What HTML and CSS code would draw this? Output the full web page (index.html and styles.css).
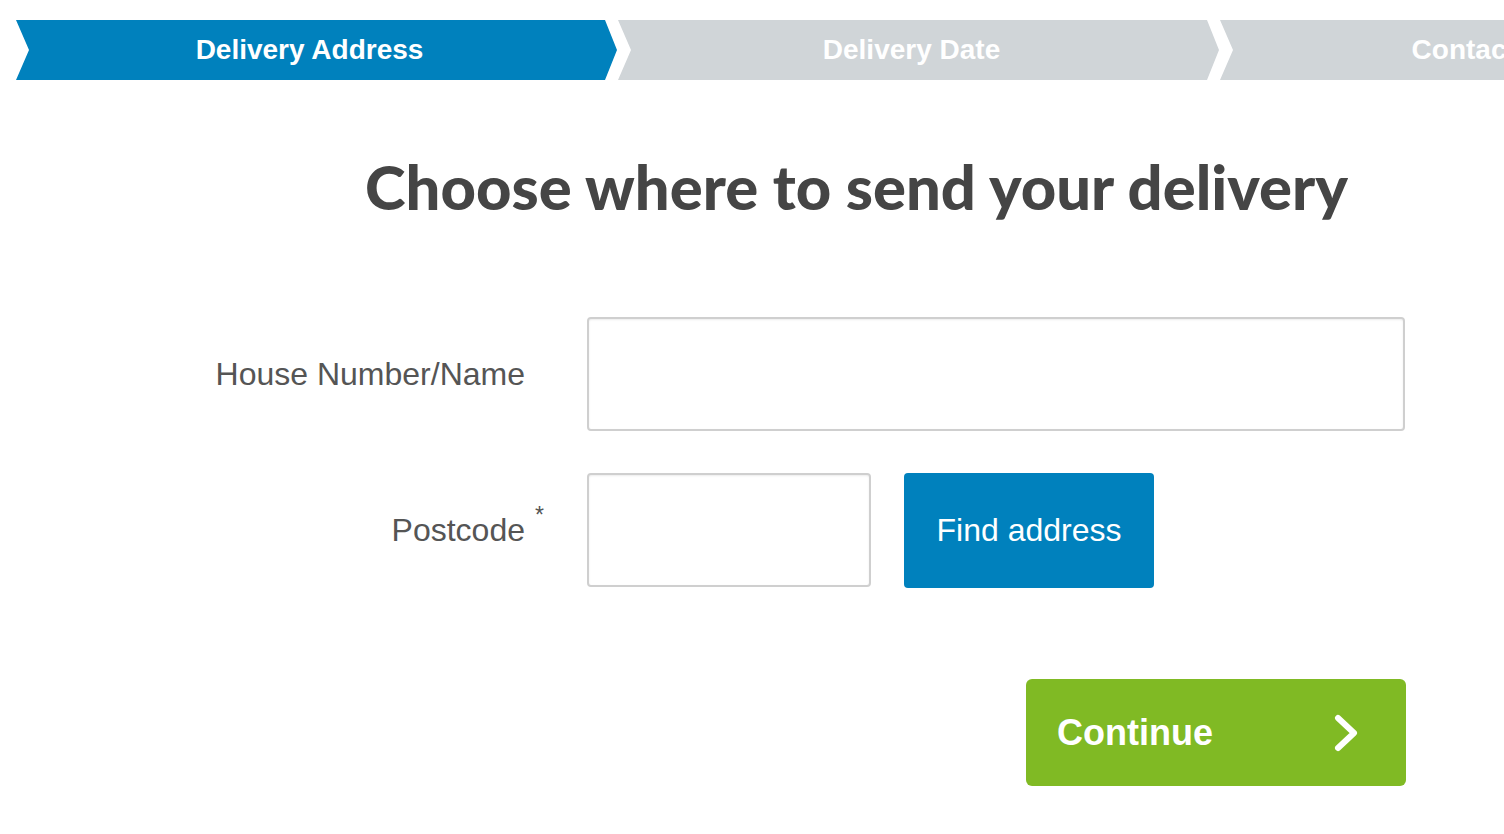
FILE: index.html
```html
<!DOCTYPE html>
<html lang="en">
<head>
    <meta charset="UTF-8">
    <title>Choose where to send your delivery</title>
    <link rel="stylesheet" href="styles.css">
</head>
<body>
    <nav class="steps">
        <div class="step active">Delivery Address</div>
        <div class="step">Delivery Date</div>
        <div class="step">Contact Details</div>
    </nav>

    <main class="content">
        <h1>Choose where to send your delivery</h1>

        <form class="address-form">
            <label class="field-label" for="house">House Number/Name</label>
            <div class="field-row">
                <input type="text" id="house" class="input input-wide">
            </div>

            <label class="field-label" for="postcode">Postcode<span class="req">*</span></label>
            <div class="field-row">
                <input type="text" id="postcode" class="input input-short">
                <button type="button" class="btn-find">Find address</button>
            </div>
        </form>

        <div class="actions">
            <button type="submit" class="btn-continue">
                <span>Continue</span>
                <svg width="26" height="38" viewBox="0 0 26 38">
                    <polyline points="4,4 20,19 4,34" fill="none" stroke="#fff" stroke-width="6" stroke-linecap="round" stroke-linejoin="round"/>
                </svg>
            </button>
        </div>
    </main>
</body>
</html>
```

FILE: styles.css
```css
body {
    margin: 0;
    font-family: "Liberation Sans", Arial, sans-serif;
    background: #fff;
    color: #555;
}
.steps {
    display: flex;
    gap: 1px;
    margin-top: 20px;
    padding-left: 16px;
    overflow: hidden;
}
.step {
    flex: 0 0 601px;
    height: 60px;
    display: flex;
    align-items: center;
    justify-content: center;
    padding-right: 14px;
    box-sizing: border-box;
    background: #d0d5d8;
    color: #fff;
    font-weight: bold;
    font-size: 28px;
    white-space: nowrap;
    clip-path: polygon(0 0, calc(100% - 12px) 0, 100% 50%, calc(100% - 12px) 100%, 0 100%, 13px 50%);
}
.step.active {
    background: #0081bd;
}
.content {
    width: 1219px;
    margin-left: 187px;
}
h1 {
    margin: 66px 0 0 120px;
    font-family: Lato, "Liberation Sans", sans-serif;
    font-weight: 900;
    font-size: 61.5px;
    line-height: 80px;
    color: #454545;
    text-align: center;
}
.address-form {
    display: grid;
    grid-template-columns: 400px 1fr;
    row-gap: 42px;
    margin-top: 91px;
}
.field-label {
    display: flex;
    align-items: center;
    justify-content: flex-end;
    padding-right: 62px;
    font-size: 32px;
    color: #555;
}
.req {
    font-size: 23px;
    align-self: flex-start;
    margin: 29px -22px 0 10px;
    width: 12px;
}
.field-row {
    display: flex;
    gap: 33px;
}
.input {
    height: 114px;
    box-sizing: border-box;
    border: 2px solid #cfcfcf;
    border-radius: 4px;
    box-shadow: inset 0 1px 2px rgba(0, 0, 0, 0.08);
    font-size: 32px;
    padding: 0 16px;
}
.input-wide {
    width: 818px;
}
.input-short {
    width: 284px;
}
.btn-find {
    width: 250px;
    height: 115px;
    border: none;
    border-radius: 4px;
    background: #0081bd;
    color: #fff;
    font-family: "Liberation Sans", Arial, sans-serif;
    font-size: 32px;
    cursor: pointer;
}
.actions {
    display: flex;
    justify-content: flex-end;
    margin-top: 91px;
}
.btn-continue {
    display: flex;
    align-items: center;
    justify-content: space-between;
    width: 380px;
    height: 107px;
    padding: 0 46px 0 31px;
    border: none;
    border-radius: 6px;
    background: #80ba24;
    color: #fff;
    font-family: "Liberation Sans", Arial, sans-serif;
    font-weight: bold;
    font-size: 36px;
    cursor: pointer;
}
```
